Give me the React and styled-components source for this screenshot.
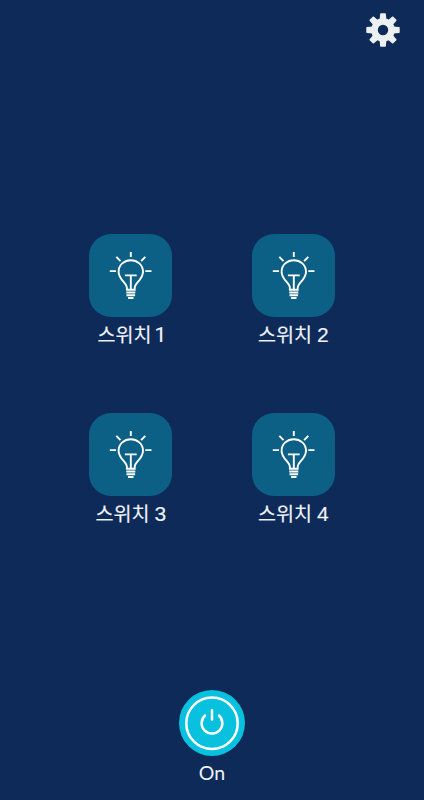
import React from "react";
import styled, { createGlobalStyle } from "styled-components";

const GlobalStyle = createGlobalStyle`
  * { box-sizing: border-box; }
  body { margin: 0; background: #0e2a58; }
`;

const Screen = styled.main`
  display: flex;
  flex-direction: column;
  align-items: center;
  width: 424px;
  height: 800px;
  overflow: hidden;
  background: #0e2a58;
  color: #f0f3fa;
  font-family: Lato, "Noto Sans CJK KR", sans-serif;
`;

const Header = styled.header`
  display: flex;
  justify-content: flex-end;
  width: 100%;
  height: 234px;
  padding: 13px 24px 0 0;
`;

const IconButton = styled.button`
  display: block;
  padding: 0;
  border: 0;
  background: none;
  cursor: pointer;
  color: inherit;
  svg { display: block; }
`;

const SettingsButton = styled(IconButton)`
  width: 34px;
  height: 34px;
`;

const SwitchGrid = styled.section`
  display: grid;
  grid-template-columns: 83px 83px;
  grid-auto-rows: 116px;
  gap: 63px 79.5px;
`;

const SwitchItem = styled.div`
  display: flex;
  flex-direction: column;
  align-items: center;
`;

const SwitchTile = styled(IconButton)`
  flex: none;
  width: 83px;
  height: 82.5px;
  border-radius: 22px;
  background: #0c6086;
`;

const SwitchLabel = styled.span`
  display: flex;
  align-items: baseline;
  gap: 5px;
  margin-top: 2.5px;
  font-family: "Noto Sans CJK KR", sans-serif;
  font-size: 19.6px;
  line-height: 30px;
  white-space: nowrap;
  -webkit-text-stroke: 0.15px currentColor;
`;

const SwitchNumber = styled.span`
  display: flex;
  justify-content: center;
  width: ${({ $narrow }) => ($narrow ? "7.5px" : "11.5px")};
  font-family: ${({ $narrow }) => ($narrow ? "Roboto" : '"Liberation Sans"')}, sans-serif;
  font-size: 21px;
`;

const Footer = styled.footer`
  display: flex;
  flex-direction: column;
  align-items: center;
  margin-top: 161px;
`;

const PowerButton = styled(IconButton)`
  width: 66px;
  height: 66px;
  border-radius: 50%;
  background: #08c1df;
`;

const PowerLabel = styled.span`
  margin-top: 5px;
  font-size: 19.5px;
  line-height: 24px;
`;

function GearIcon() {
  return (
    <svg width="34" height="34" viewBox="-17 -17 34 34" fill="#edf0f0" stroke="#edf0f0" strokeLinejoin="round">
      <circle r="8.5" fill="none" strokeWidth="6.6" />
      {[0, 45, 90, 135, 180, 225, 270, 315].map((angle) => (
        <path key={angle} d="M-2.7-10 L-2.2-16 H2.2 L2.7-10Z" strokeWidth="1.4" transform={`rotate(${angle})`} />
      ))}
    </svg>
  );
}

function BulbIcon() {
  return (
    <svg width="83" height="83" viewBox="-0.3 0 83 83" fill="none" stroke="#fff" strokeWidth="1.9">
      <path d="M41.5 18v5M20.5 37.1h6.2M56 37.1h6.2M27 22.8l4.2 4.4M56 22.8l-4.2 4.4" />
      <path d="M37.6 55.8V54c0-5.2-8.3-8.2-8.3-16.3C29.3 30.9 35 26.2 41.5 26.2s12.2 4.7 12.2 11.5c0 8.1-8.3 11.1-8.3 16.3v1.8Z" />
      <path d="M35.6 41.4h11.8M41.5 41.4v14" />
      <path d="M37 58.5h9M37.2 61.3h8.6M38.8 64h5.4" />
    </svg>
  );
}

function PowerIcon() {
  return (
    <svg width="66" height="66" viewBox="0 0 66 66" fill="none" stroke="#fff" strokeWidth="2.5">
      <circle cx="33" cy="33.3" r="25.7" />
      <path d="M26 25.5a10.4 10.4 0 1 0 14 0M33 20.2v9.2" strokeLinecap="round" />
    </svg>
  );
}

export default function App() {
  return (
    <Screen>
      <GlobalStyle />
      <Header>
        <SettingsButton aria-label="설정"><GearIcon /></SettingsButton>
      </Header>
      <SwitchGrid>
        {[1, 2, 3, 4].map((number) => (
          <SwitchItem key={number}>
            <SwitchTile aria-label={`스위치 ${number}`}><BulbIcon /></SwitchTile>
            <SwitchLabel>
              스위치 <SwitchNumber $narrow={number === 1}>{number}</SwitchNumber>
            </SwitchLabel>
          </SwitchItem>
        ))}
      </SwitchGrid>
      <Footer>
        <PowerButton aria-label="전원"><PowerIcon /></PowerButton>
        <PowerLabel>On</PowerLabel>
      </Footer>
    </Screen>
  );
}
